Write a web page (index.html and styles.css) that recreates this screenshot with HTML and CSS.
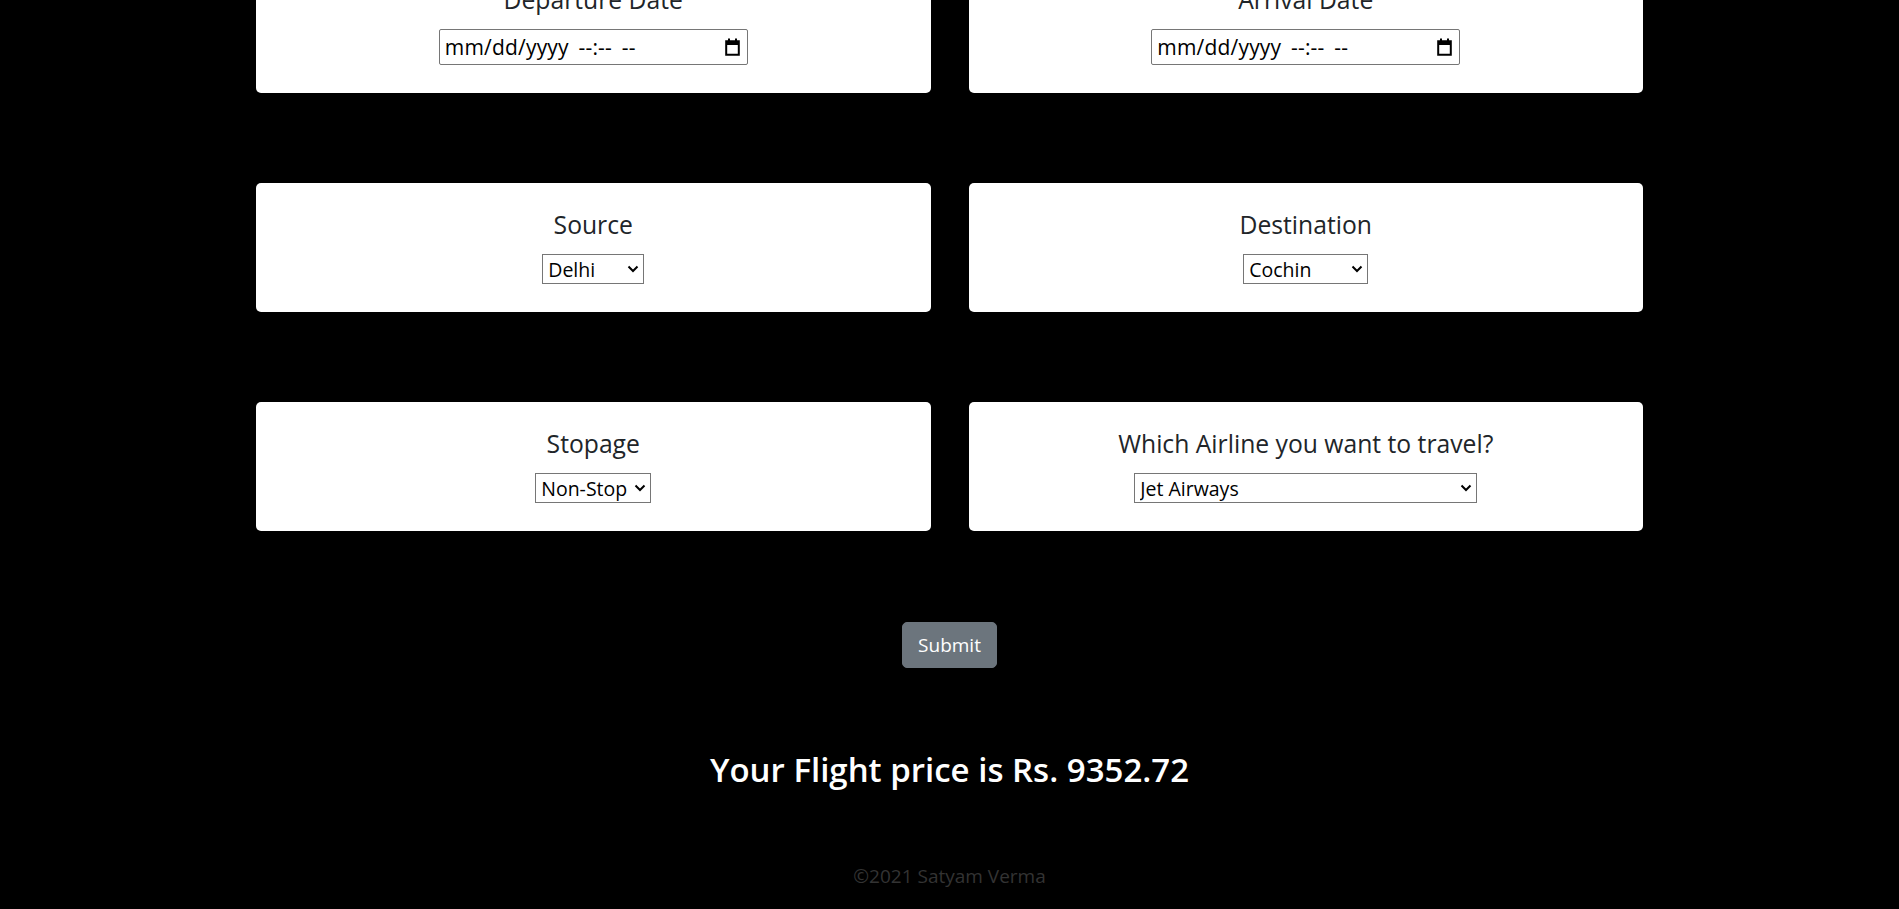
FILE: index.html
```html
<!DOCTYPE html>
<html lang="en">
<head>
<meta charset="utf-8">
<title>Flight Price Prediction</title>
<link rel="stylesheet" href="styles.css">
</head>
<body>
<main class="page">
  <form class="form-grid">
    <section class="card">
      <h5 class="card-title">Departure Date</h5>
      <div class="dt-input">
        <span class="dt-text">mm/dd/yyyy --:-- --</span>
        <svg class="cal" viewBox="0 0 15 18" width="15" height="18" aria-hidden="true">
          <path d="M1.2 3.2h12.6v13.6H1.2z" fill="none" stroke="#000" stroke-width="2"/>
          <rect x="1" y="3" width="13" height="4" fill="#000"/>
          <rect x="3" y="0.5" width="2" height="3" fill="#000"/>
          <rect x="10" y="0.5" width="2" height="3" fill="#000"/>
        </svg>
      </div>
    </section>
    <section class="card">
      <h5 class="card-title">Arrival Date</h5>
      <div class="dt-input">
        <span class="dt-text">mm/dd/yyyy --:-- --</span>
        <svg class="cal" viewBox="0 0 15 18" width="15" height="18" aria-hidden="true">
          <path d="M1.2 3.2h12.6v13.6H1.2z" fill="none" stroke="#000" stroke-width="2"/>
          <rect x="1" y="3" width="13" height="4" fill="#000"/>
          <rect x="3" y="0.5" width="2" height="3" fill="#000"/>
          <rect x="10" y="0.5" width="2" height="3" fill="#000"/>
        </svg>
      </div>
    </section>
    <section class="card">
      <h5 class="card-title">Source</h5>
      <select class="sel sel-source">
        <option>Delhi</option>
        <option>Kolkata</option>
        <option>Mumbai</option>
        <option>Chennai</option>
      </select>
    </section>
    <section class="card">
      <h5 class="card-title">Destination</h5>
      <select class="sel sel-dest">
        <option>Cochin</option>
        <option>Delhi</option>
        <option>New Delhi</option>
        <option>Hyderabad</option>
        <option>Kolkata</option>
      </select>
    </section>
    <section class="card">
      <h5 class="card-title">Stopage</h5>
      <select class="sel sel-stop">
        <option>Non-Stop</option>
        <option>1</option>
        <option>2</option>
        <option>3</option>
        <option>4</option>
      </select>
    </section>
    <section class="card">
      <h5 class="card-title">Which Airline you want to travel?</h5>
      <select class="sel sel-airline">
        <option>Jet Airways</option>
        <option>IndiGo</option>
        <option>Air India</option>
        <option>Multiple carriers</option>
        <option>SpiceJet</option>
        <option>Vistara</option>
        <option>Air Asia</option>
        <option>GoAir</option>
        <option>Multiple carriers Premium economy</option>
        <option>Jet Airways Business</option>
        <option>Vistara Premium economy</option>
        <option>Trujet</option>
      </select>
    </section>
  </form>
  <div class="actions">
    <button type="button" class="btn">Submit</button>
  </div>
  <h3 class="result">Your Flight price is Rs. 9352.72</h3>
  <footer class="footer">©2021 Satyam Verma</footer>
</main>
</body>
</html>
```

FILE: styles.css
```css
html, body {
  margin: 0;
  padding: 0;
  background: #000;
}

body {
  font-family: "Open Sans", "Noto Sans", "Liberation Sans", sans-serif;
  color: #212529;
}

.page {
  width: 1387px;
  margin: -42px auto 0;
  padding-bottom: 40px;
}

.form-grid {
  display: grid;
  grid-template-columns: 1fr 1fr;
  column-gap: 38px;
  row-gap: 90px;
}

.card {
  background: #fff;
  border-radius: 5px;
  padding: 27px 16px 28px;
  display: flex;
  flex-direction: column;
  align-items: center;
}

.card-title {
  margin: 0 0 15px;
  font-size: 24.7px;
  font-weight: 500;
  line-height: 29px;
  color: #212529;
}

.dt-input {
  box-sizing: border-box;
  width: 309px;
  height: 36px;
  border: 1px solid #767676;
  border-radius: 2px;
  background: #fff;
  display: flex;
  align-items: center;
  justify-content: space-between;
  padding: 0 7px 0 5px;
  font-size: 21px;
  color: #000;
}

.dt-text {
  white-space: pre;
  letter-spacing: 0.2px;
  word-spacing: 4px;
}

.cal {
  display: block;
}

.sel {
  box-sizing: border-box;
  height: 30px;
  font-family: inherit;
  font-size: 19.5px;
  color: #000;
  background-color: #fff;
  border: 1px solid #767676;
  border-radius: 0;
  padding: 0 20px 0 5px;
  appearance: none;
  -webkit-appearance: none;
  background-image: url("data:image/svg+xml,%3Csvg xmlns='http://www.w3.org/2000/svg' viewBox='0 0 12 8'%3E%3Cpath d='M1.5 1.5l4.5 4.5 4.5-4.5' fill='none' stroke='%23000' stroke-width='2'/%3E%3C/svg%3E");
  background-repeat: no-repeat;
  background-position: right 4px center;
  background-size: 12px 8px;
}

.sel-source { width: 102px; }
.sel-dest { width: 125px; }
.sel-stop { width: 116px; }
.sel-airline { width: 343px; }

.actions {
  display: flex;
  justify-content: center;
  margin-top: 91px;
}

.btn {
  font-family: inherit;
  font-size: 19px;
  line-height: 28px;
  color: #fff;
  background: #6c757d;
  border: 1px solid #6c757d;
  border-radius: 5px;
  padding: 8px 15px;
  width: 95px;
  height: 46px;
  cursor: pointer;
}

.result {
  margin: 82px 0 0;
  text-align: center;
  color: #fff;
  font-size: 33px;
  font-weight: 600;
  line-height: 40px;
}

.footer {
  margin-top: 74px;
  text-align: center;
  color: #333;
  font-size: 19px;
  line-height: 24px;
}
```
